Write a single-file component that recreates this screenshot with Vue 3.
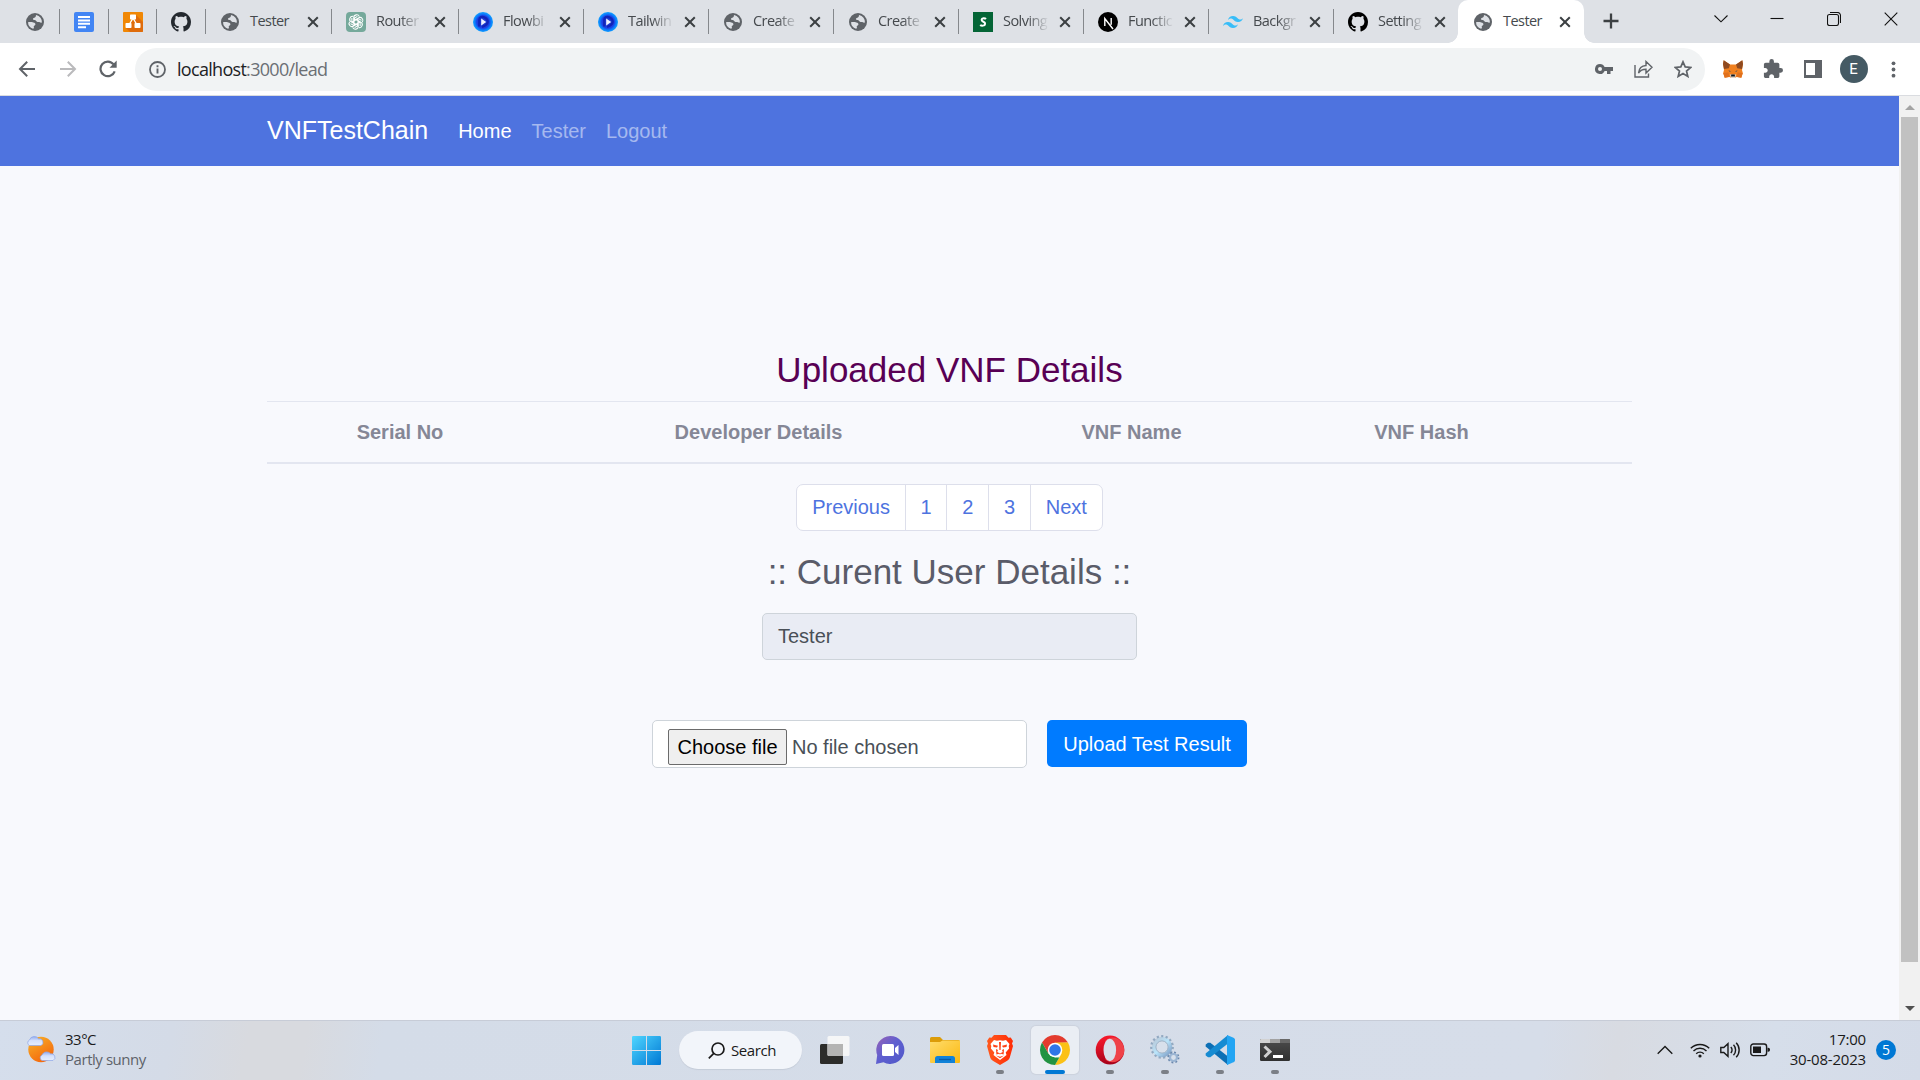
<script setup>
const pinned = [
  { icon: 'globe', size: 18, width: 49 },
  { icon: 'docs', size: 20, width: 49 },
  { icon: 'diagram', size: 20, width: 48 },
  { icon: 'github', size: 20, width: 49, tint: '#24292f' },
]
const tabs = [
  { icon: 'globe', title: 'Tester', width: 126 },
  { icon: 'openai', title: 'Router', width: 127, fade: true },
  { icon: 'flow', title: 'Flowbi', width: 125, fade: true },
  { icon: 'flow', title: 'Tailwin', width: 125, fade: true },
  { icon: 'globe', title: 'Create', width: 125, fade: true },
  { icon: 'globe', title: 'Create', width: 125, fade: true },
  { icon: 'scaler', title: 'Solving', width: 125, fade: true },
  { icon: 'next', title: 'Functic', width: 125, fade: true },
  { icon: 'tailwind', title: 'Backgr', width: 125, fade: true },
  { icon: 'github', title: 'Setting', width: 126, fade: true, last: true },
]
const columns = [
  { label: 'Serial No', width: 266 },
  { label: 'Developer Details', width: 451 },
  { label: 'VNF Name', width: 295 },
  { label: 'VNF Hash', width: 285 },
  { label: '', width: 68 },
]
const pages = ['Previous', '1', '2', '3', 'Next']
const apps = [
  { icon: 'taskview' },
  { icon: 'chat' },
  { icon: 'folder' },
  { icon: 'brave', running: true },
  { icon: 'chrome', running: true, active: true },
  { icon: 'opera', running: true },
  { icon: 'gears', running: true },
  { icon: 'vscode', running: true },
  { icon: 'terminal', running: true },
]
</script>

<template>
  <div class="screen">
    <svg class="defs" aria-hidden="true">
      <defs>
        <linearGradient id="gWin" x1="0" y1="0" x2="1" y2="1"><stop offset="0" stop-color="#4fd6ff" /><stop offset="1" stop-color="#0078d4" /></linearGradient>
        <linearGradient id="gSun" x1="0" y1="0" x2="0.6" y2="1"><stop offset="0" stop-color="#f8b52a" /><stop offset="1" stop-color="#f4670c" /></linearGradient>
        <linearGradient id="gCloud" x1="0" y1="0" x2="0" y2="1"><stop offset="0" stop-color="#8faaf0" /><stop offset=".45" stop-color="#d4e0fb" /><stop offset="1" stop-color="#e6eefd" /></linearGradient>
        <linearGradient id="gChat" x1="0" y1="0" x2="1" y2="1"><stop offset="0" stop-color="#9a62b4" /><stop offset=".45" stop-color="#5f5fd0" /><stop offset="1" stop-color="#5058c8" /></linearGradient>
        <linearGradient id="gFolder" x1="0" y1="0" x2="1" y2="1"><stop offset="0" stop-color="#ffdc6b" /><stop offset="1" stop-color="#fbb911" /></linearGradient>
        <linearGradient id="gBrave" x1="0" y1="0" x2="1" y2="0"><stop offset="0" stop-color="#ff5a1f" /><stop offset="1" stop-color="#ff2b05" /></linearGradient>
        <linearGradient id="gOpera" x1="0" y1="0" x2="0.2" y2="1"><stop offset="0" stop-color="#ff1b2d" /><stop offset="1" stop-color="#a8021a" /></linearGradient>
        <linearGradient id="gGear" x1="0" y1="0" x2="1" y2="1"><stop offset="0" stop-color="#b9c7d6" /><stop offset=".5" stop-color="#b9e4fa" /><stop offset="1" stop-color="#7c9cc4" /></linearGradient>
        <linearGradient id="gTerm" x1="0" y1="0" x2="0" y2="1"><stop offset="0" stop-color="#4c4c4c" /><stop offset="1" stop-color="#303030" /></linearGradient>
        <radialGradient id="gFlow"><stop offset="0" stop-color="#2a3cc8" /><stop offset=".62" stop-color="#1b3fe6" /><stop offset=".8" stop-color="#0b7cfb" /><stop offset="1" stop-color="#11a0ff" /></radialGradient>
      </defs>
      <symbol id="globe" viewBox="0 0 18 18">
        <circle cx="9" cy="9" r="9" fill="#5f6368" />
        <path fill="#dee1e6" d="M10.2 2.1C9.6 3 10.1 3.6 9.2 4.2 8.2 4.8 6.9 4.9 6.9 6.1c0 .9 1 .9 1.8 1 1.2.1 1.3 1.2 2.3 1.7.9.4 1.5-.1 2.3.3.8.5 1.7.6 2.6.5A7 7 0 0 0 10.2 2.1z" />
        <path fill="#dee1e6" d="M2 9.3C3.5 9 5.7 9 7.3 9.4c1.5.4 2.4 1 2.1 2.2-.2.9-1.2 1-1.6 1.7-.3.7.3 1 .1 1.6-.1.4-.6.7-.9.8A7 7 0 0 1 2 9.3z" />
      </symbol>
      <symbol id="docs" viewBox="0 0 20 20">
        <rect width="20" height="20" rx="2" fill="#4285f4" />
        <path stroke="#fff" stroke-width="2" d="M4 5h12M4 8.400h12M4 11.800h12M4 15.200h8" />
      </symbol>
      <symbol id="diagram" viewBox="0 0 20 20">
        <rect width="20" height="20" rx="1" fill="#f08705" />
        <path fill="#df6c0c" d="M13 3l7 7v9a1 1 0 0 1-1 1H7l-4-4 7-8z" />
        <path stroke="#fff" stroke-width="1.4" fill="none" d="M10 6L6 13M10 6l4 7" />
        <rect x="7" y="2.5" width="6" height="5" rx=".7" fill="#fff" /><rect x="2.5" y="11" width="6" height="5" rx=".7" fill="#fff" /><rect x="11.5" y="11" width="6" height="5" rx=".7" fill="#fff" />
      </symbol>
      <symbol id="github" viewBox="0 0 16 16">
        <path fill="currentColor" d="M8 0C3.580 0 0 3.580 0 8c0 3.540 2.290 6.530 5.470 7.590.4.070.55-.17.55-.38 0-.19-.01-.82-.01-1.490-2.010.37-2.530-.49-2.690-.94-.09-.23-.48-.94-.82-1.130-.28-.15-.68-.52-.01-.53.63-.01 1.080.58 1.230.82.72 1.210 1.870.87 2.330.66.07-.52.28-.87.51-1.070-1.780-.2-3.640-.89-3.640-3.950 0-.87.31-1.590.82-2.150-.08-.2-.36-1.020.08-2.120 0 0 .67-.21 2.200.82.64-.18 1.320-.27 2-.27s1.360.09 2 .27c1.530-1.040 2.200-.82 2.200-.82.44 1.100.16 1.920.08 2.120.51.56.82 1.270.82 2.150 0 3.070-1.870 3.750-3.650 3.950.29.25.54.73.54 1.480 0 1.070-.01 1.930-.01 2.200 0 .21.15.46.55.38A8.010 8.010 0 0 0 16 8c0-4.420-3.580-8-8-8z" />
      </symbol>
      <symbol id="openai" viewBox="0 0 20 20">
        <rect width="20" height="20" rx="4" fill="#75a99b" />
        <g fill="none" stroke="#fff" stroke-width="1.05">
          <path id="petal" d="M10 7.700L7.700 9V5.800c0-3.400 4.500-4 5.700-1.200M8.600 8.500V6.100l2.800-1.700" />
          <use href="#petal" transform="rotate(60 10 10)" /><use href="#petal" transform="rotate(120 10 10)" /><use href="#petal" transform="rotate(180 10 10)" /><use href="#petal" transform="rotate(240 10 10)" /><use href="#petal" transform="rotate(300 10 10)" />
        </g>
      </symbol>
      <symbol id="flow" viewBox="0 0 20 20">
        <circle cx="10" cy="10" r="10" fill="url(#gFlow)" />
        <path fill="none" stroke="#1224b8" stroke-width="2.2" d="M6.200 14.500V8c0-3 3-4 5.500-2.500 4 2.200 4 6 .3 8L9 15" />
        <path fill="#eef2ff" d="M8.200 6.400l5 3.500-5 3.500z" />
      </symbol>
      <symbol id="scaler" viewBox="0 0 20 20">
        <rect width="20" height="20" fill="#046536" />
        <path fill="none" stroke="#fff" stroke-width="2" d="M13 7C12 6 8.800 5.700 8.600 7.900 8.400 10 12.400 9.500 12.100 11.800 11.800 14.200 8.300 13.900 7.200 12.900" />
      </symbol>
      <symbol id="next" viewBox="0 0 20 20">
        <circle cx="10" cy="10" r="10" fill="#000" />
        <path fill="none" stroke="#fff" stroke-width="1.4" d="M6.800 14V6.500L15 17M13.200 6v6.800" />
      </symbol>
      <symbol id="tailwind" viewBox="0 0 24 24">
        <path fill="#38bdf8" d="M12 4.800c-3.200 0-5.200 1.600-6 4.800 1.200-1.600 2.600-2.200 4.200-1.800.91.23 1.570.89 2.290 1.620C13.670 10.620 15.030 12 18 12c3.200 0 5.200-1.600 6-4.800-1.200 1.600-2.600 2.200-4.200 1.800-.91-.23-1.570-.89-2.290-1.620C16.330 6.180 14.970 4.800 12 4.800zM6 12c-3.200 0-5.200 1.600-6 4.800 1.200-1.600 2.600-2.200 4.200-1.800.91.230 1.570.89 2.290 1.620C7.670 17.820 9.030 19.200 12 19.200c3.200 0 5.200-1.600 6-4.800-1.200 1.600-2.600 2.200-4.200 1.800-.91-.23-1.570-.89-2.290-1.620C10.330 13.380 8.970 12 6 12z" />
      </symbol>
      <symbol id="close" viewBox="0 0 12 12"><path fill="none" stroke="#3c4043" stroke-width="2" d="M1.200 1.200l9.600 9.600M10.800 1.200l-9.600 9.600" /></symbol>

      <symbol id="taskview" viewBox="0 0 30 30">
        <rect x="0" y="9" width="23" height="20" rx="1.5" fill="#2c2c2a" />
        <rect x="7.5" y="1" width="22" height="20" rx="1.5" fill="#f5f6f7" />
        <path fill="#b4b4b3" d="M7.500 9H23v12H9a1.500 1.500 0 0 1-1.500-1.500z" />
      </symbol>
      <symbol id="chat" viewBox="0 0 30 30">
        <path fill="url(#gChat)" d="M15.200 1A14 14 0 1 1 8.500 27.200L1 29 2.200 20A14 14 0 0 1 15.200 1z" />
        <rect x="7" y="9" width="12" height="12" rx="1.5" fill="#fff" /><path fill="#fff" d="M20 13l3.500-3v10L20 17z" />
      </symbol>
      <symbol id="folder" viewBox="0 0 30 30">
        <path fill="#dc9c08" d="M0 3.500A1.500 1.500 0 0 1 1.500 2H10l3 3h15.500A1.500 1.500 0 0 1 30 6.500V12H0z" />
        <path fill="url(#gFolder)" d="M0 7h10l2.500-1.500H30v21.500a1 1 0 0 1-1 1H1a1 1 0 0 1-1-1z" />
        <path fill="#1182d8" d="M5 28v-4.500a2.500 2.500 0 0 1 2.500-2.500h15a2.500 2.500 0 0 1 2.500 2.500V28z" /><path stroke="#0a5ba6" stroke-width="1.3" d="M9 24.500h12" />
      </symbol>
      <symbol id="brave" viewBox="0 0 30 30">
        <path fill="url(#gBrave)" d="M9 0h12l2.500 2.700 2.200-.2L28 6l-1 2.500L28 11l-3.200 11.500c-.5 1.700-1.500 2.500-3 3.500L15 30l-6.800-4c-1.500-1-2.500-1.800-3-3.500L2 11l1-2.500L2 6l2.300-3.500 2.200.2z" />
        <path fill="#fff" d="M9 5l3 .8 3-.6 3 .6 3-.8 3.500 4-.8 2 .4 2.500-3.400 4 .8 2.500L19 22l-4 3-4-3-2.500-2 .8-2.500-3.400-4 .4-2.500-.8-2z" />
        <path fill="#ff4216" d="M8 9.500l5 1.200-1 1.700-3.500-.3zM22 9.500l-5 1.200 1 1.700 3.500-.3zM11 14l2 1-.8 2L15 18.600l2.800-1.600-.8-2 2-1-.4 5.500-2.600-.8-1 .8-1-.8-2.600.8zM14 7h2l-.4 8h-1.200zM11 20.500l4 1.200 4-1.200-4 2.800z" />
      </symbol>
      <symbol id="chrome" viewBox="0 0 30 30">
        <path fill="#e33b2e" d="M2.010 7.500A15 15 0 0 1 27.990 7.500L15 8 8.500 18.750z" />
        <path fill="#fbc116" d="M27.990 7.500A15 15 0 0 1 15 30L21.500 18.750 15 7.500z" />
        <path fill="#229342" d="M15 30A15 15 0 0 1 2.010 7.500L8.500 18.750 15 22.500h4.300z" />
        <circle cx="15" cy="15" r="7.3" fill="#fff" /><circle cx="15" cy="15" r="5.8" fill="#2f76e8" />
      </symbol>
      <symbol id="opera" viewBox="0 0 30 30">
        <ellipse cx="15" cy="15" rx="14.3" ry="14.5" fill="url(#gOpera)" />
        <path fill="#ef4248" d="M10.500 5.500C15 1 23 1.500 27 8c3 5 3 10 0 14-4 6-12 7-16.500 2.500z" />
        <ellipse cx="14.8" cy="15" rx="6.3" ry="11.2" fill="#d9dfe9" />
      </symbol>
      <symbol id="gears" viewBox="0 0 30 30">
        <circle cx="12" cy="12" r="8.3" fill="#c7dbe9" stroke="url(#gGear)" stroke-width="4" /><circle cx="12" cy="12" r="10.8" fill="none" stroke="#92a9c1" stroke-width="2.2" stroke-dasharray="2.2 2.32" /><circle cx="12" cy="12" r="6.1" fill="#d8e0eb" stroke="#93a7bd" stroke-width=".8" />
        <circle cx="23.5" cy="22.5" r="3.5" fill="#d8e0eb" stroke="#9bb5d3" stroke-width="2.2" /><circle cx="23.5" cy="22.5" r="5.2" fill="none" stroke="#6c89ae" stroke-width="1.5" stroke-dasharray="1.9 2.18" />
      </symbol>
      <symbol id="vscode" viewBox="0 0 30 30">
        <path fill="#0c6fb5" d="M.7 9.600L3 7.700l2.300.1L23 21.500V30L.6 11.400z" />
        <path fill="#168bd2" d="M.7 20.400L3 22.300l2.300-.1L23 8.500V0L.6 18.600z" />
        <path fill="#23a5f3" d="M22 0l6.500 2.700c1 .5 1.500 1.200 1.500 2.300v20c0 1.100-.5 1.800-1.500 2.300L22 30z" />
      </symbol>
      <symbol id="terminal" viewBox="0 0 30 30">
        <rect x="0" y="4" width="30" height="22" rx="1.2" fill="url(#gTerm)" />
        <path fill="#d2d2d2" d="M1.200 4H10v4H0V5.200A1.200 1.200 0 0 1 1.200 4z" /><path fill="#a2a2a2" d="M10 4h10v4H10z" /><path fill="#686868" d="M20 4h8.800A1.200 1.200 0 0 1 30 5.200V8H20z" />
        <path fill="none" stroke="#d0d0d0" stroke-width="3" d="M4.500 11.500l5.500 5.200-5.500 5.300" /><path fill="#fff" d="M13 20h10v3H13z" />
      </symbol>
    </svg>

    <header class="tabstrip">
      <div v-for="(t, i) in pinned" :key="'p' + i" class="tab pin" :style="{ width: t.width + 'px' }">
        <svg :width="t.size" :height="t.size" :style="{ color: t.tint }"><use :href="'#' + t.icon" /></svg>
      </div>
      <div v-for="(t, i) in tabs" :key="i" class="tab" :class="{ last: t.last }" :style="{ width: t.width + 'px' }">
        <span class="fav"><svg :width="t.icon === 'globe' ? 18 : 20" :height="t.icon === 'globe' ? 18 : 20"><use :href="'#' + t.icon" /></svg></span>
        <span class="title" :class="{ fade: t.fade }">{{ t.title }}</span>
        <svg class="x" width="12" height="12"><use href="#close" /></svg>
      </div>
      <div class="tab current">
        <span class="fav"><svg width="18" height="18"><use href="#globe" /></svg></span>
        <span class="title">Tester</span>
        <svg class="x" width="12" height="12"><use href="#close" /></svg>
      </div>
      <svg class="plus" width="16" height="16" viewBox="0 0 16 16"><path stroke="#3c4043" stroke-width="2.3" d="M8 .5v15M.5 8h15" /></svg>
      <div class="controls">
        <svg width="14" height="14" viewBox="0 0 14 14"><path d="M.5 3.500L7 9.800l6.500-6.300" /></svg>
        <svg width="14" height="14" viewBox="0 0 14 14"><path d="M.5 6.500h13" /></svg>
        <svg width="14" height="14" viewBox="0 0 14 14"><rect x=".5" y="2.5" width="11" height="11" rx="2" /><path d="M3 .5h7.500a3 3 0 0 1 3 3V11" /></svg>
        <svg width="14" height="14" viewBox="0 0 14 14"><path d="M.7.700l12.600 12.600M13.300.700L.7 13.300" /></svg>
      </div>
    </header>

    <div class="toolbar">
      <div class="nav-buttons">
        <svg width="18" height="18" viewBox="0 0 18 18" fill="none" stroke="#5f6368" stroke-width="2"><path d="M17 9H2.500M9.200 1.700L2 9l7.200 7.300" /></svg>
        <svg width="18" height="18" viewBox="0 0 18 18" fill="none" stroke="#bababc" stroke-width="2"><path d="M1 9h14.500M8.800 1.700L16 9l-7.200 7.300" /></svg>
        <svg width="18" height="18" viewBox="0 0 18 18" fill="none" stroke="#5f6368" stroke-width="2.2"><path d="M15.700 11.300A7.300 7.300 0 1 1 14.600 4.400" /><path fill="#5f6368" stroke="none" d="M17.700.5v7.200h-7.200z" /></svg>
      </div>
      <div class="omnibox">
        <svg width="17" height="17" viewBox="0 0 17 17"><circle cx="8.5" cy="8.5" r="7.5" fill="none" stroke="#5f6368" stroke-width="1.8" /><path stroke="#5f6368" stroke-width="1.9" d="M8.500 7.500v5M8.500 4.300v2" /></svg>
        <span class="url">localhost<i>:3000/lead</i></span>
        <svg class="key" width="18" height="12" viewBox="0 0 18 12"><path fill="#5f6368" fill-rule="evenodd" d="M5 1a5 5 0 1 0 4.600 7H12v3h3.500V8H18V4H9.600A5 5 0 0 0 5 1zm0 3a2 2 0 1 1 0 4 2 2 0 0 1 0-4z" /></svg>
        <svg class="share" width="19" height="18" viewBox="0 0 19 18" fill="none" stroke="#5f6368" stroke-width="1.4"><path d="M1 5v12h13.500v-3.500M4.500 13C5 8.500 7.500 5.700 12 5.500V1.500L18 7.300l-6 5.700V9.200C8.500 9.200 6.300 10.300 4.500 13z" /></svg>
        <svg class="star" width="18" height="18" viewBox="0 0 18 18"><path fill="none" stroke="#5f6368" stroke-width="1.7" d="M9 1.800l2.200 5.100 5.500.5-4.200 3.600 1.300 5.400L9 13.500l-4.800 2.900L5.500 11 1.300 7.400l5.500-.5z" /></svg>
      </div>
      <svg class="fox" width="20" height="19" viewBox="0 0 20 19">
        <path fill="#f0801f" d="M.7.300L7 4.500h6L19.300.3 20 4l-1 6 .8 3-1.500 4.700-4.700-.7L11.500 18h-3l-2.100-1-4.700.7L.2 13 1 10 0 4z" />
        <path fill="#8f4a20" d="M.7.300L7 4.500l-1.200 3.700L1 8.900 0 4zM19.300.3L13 4.500l1.200 3.700 4.800.7L20 4z" />
        <path fill="#e0701d" d="M.2 13l5.200-.4 1 4.200-4.700.9zM19.800 13l-5.200-.4-1 4.200 4.700.9z" />
        <path fill="#3a4a5e" d="M5.500 10.300l2.700 1.300-2-.2zM14.500 10.300l-2.700 1.300 2-.2z" /><path fill="#dcd3cb" d="M6.800 14.500h6.400L12 18H8z" /><path fill="#10181f" d="M8.300 14.600h3.400l.3 1.800H8z" />
      </svg>
      <svg class="puzzle" width="20" height="20" viewBox="1 1 22 22"><path fill="#5f6368" d="M20.500 11H19V7c0-1.100-.9-2-2-2h-4V3.500a2.500 2.500 0 0 0-5 0V5H4c-1.100 0-1.990.9-1.990 2v3.800H3.500c1.490 0 2.700 1.210 2.700 2.700s-1.210 2.700-2.700 2.700H2V20c0 1.100.9 2 2 2h3.800v-1.500c0-1.490 1.210-2.700 2.700-2.700s2.700 1.210 2.700 2.700V22H17c1.100 0 2-.9 2-2v-4h1.500a2.500 2.500 0 0 0 0-5z" /></svg>
      <svg class="panel" width="18" height="18" viewBox="0 0 18 18"><path fill="#5f6368" fill-rule="evenodd" d="M0 0h18v18H0zM2 3v12h9V3z" /></svg>
      <span class="avatar">E</span>
      <svg class="dots" width="5" height="17" viewBox="0 0 5 17" fill="#5f6368"><circle cx="2.500" cy="2.300" r="1.900" /><circle cx="2.500" cy="8.500" r="1.900" /><circle cx="2.500" cy="14.700" r="1.900" /></svg>
    </div>

    <div class="viewport">
      <div class="page">
        <nav class="navbar">
          <a class="brand">VNFTestChain</a>
          <a class="link on">Home</a>
          <a class="link">Tester</a>
          <a class="link">Logout</a>
        </nav>
        <main class="container">
          <h2 class="heading uploaded">Uploaded VNF Details</h2>
          <table class="vnf">
            <thead>
              <tr><th v-for="c in columns" :key="c.label" :style="{ width: c.width + 'px' }">{{ c.label }}</th></tr>
            </thead>
          </table>
          <ul class="pagination">
            <li v-for="p in pages" :key="p">{{ p }}</li>
          </ul>
          <h2 class="heading">:: Curent User Details ::</h2>
          <div class="field role">Tester</div>
          <div class="upload">
            <div class="field file"><span class="choose">Choose file</span><span>No file chosen</span></div>
            <div class="submit">Upload Test Result</div>
          </div>
        </main>
      </div>
      <div class="scrollbar">
        <i class="up"></i>
        <div class="thumb"></div>
        <i class="down"></i>
      </div>
    </div>

    <footer class="taskbar">
      <div class="weather">
        <svg width="30" height="30" viewBox="0 0 30 30">
          <circle cx="15" cy="15.5" r="12.7" fill="url(#gSun)" />
          <path fill="url(#gCloud)" stroke="#8ea6e6" stroke-width=".7" d="M3.500 11.500a3 3 0 0 1 0-5.500 5 5 0 0 1 9-1.200 3.600 3.600 0 0 1 2.500 6.700z" />
          <path fill="url(#gCloud)" stroke="#8ea6e6" stroke-width=".7" d="M16 26.500a3 3 0 0 1 0-5.500 5 5 0 0 1 8.500-1.200A3.600 3.600 0 0 1 27 26.500z" />
        </svg>
        <div class="weather-text"><span>33°C</span><span class="cond">Partly sunny</span></div>
      </div>
      <svg class="start" width="29" height="29" viewBox="0 0 29 29"><path fill="url(#gWin)" d="M1.200 0H14v14H0V1.200A1.200 1.200 0 0 1 1.200 0zM15 0h12.800A1.200 1.200 0 0 1 29 1.200V14H15zM0 15h14v14H1.200A1.200 1.200 0 0 1 0 27.800zM15 15h14v12.800a1.200 1.200 0 0 1-1.200 1.200H15z" /></svg>
      <div class="search">
        <svg width="17" height="17" viewBox="0 0 17 17" fill="none" stroke="#1a1a1a" stroke-width="1.7"><circle cx="10" cy="7" r="6" /><path d="M5.800 11.300L.8 16.300" /></svg>
        <span>Search</span>
      </div>
      <div class="apps">
        <div v-for="a in apps" :key="a.icon" class="app" :class="{ active: a.active }">
          <svg width="30" height="30"><use :href="'#' + a.icon" /></svg>
          <i v-if="a.running" class="mark"></i>
        </div>
      </div>
      <div class="tray">
        <svg width="16" height="10" viewBox="0 0 16 10"><path d="M.7 8.800L8 1.500l7.300 7.300" /></svg>
        <svg width="20" height="16" viewBox="0 0 20 16"><path d="M.8 6.300a13 13 0 0 1 18.400 0M3.500 9a9.200 9.200 0 0 1 13 0M6.200 11.700a5.400 5.400 0 0 1 7.600 0" /><circle cx="10" cy="14" r="1.6" fill="#1a1a1a" stroke="none" /></svg>
        <svg width="20" height="16" viewBox="0 0 20 16"><path d="M.8 5.500h3L8 1.700v12.600L3.800 10.500h-3zM10.800 5a4.200 4.200 0 0 1 0 6M13.500 2.800a7.500 7.500 0 0 1 0 10.400M16.200.7a10.500 10.500 0 0 1 0 14.600" /></svg>
        <svg width="20" height="14" viewBox="0 0 20 14"><rect x=".8" y="1" width="15.8" height="11.6" rx="2.5" /><path fill="#1a1a1a" stroke="none" d="M3 3.500h8v6.600H3zM17.500 4.800h.8a1.700 1.700 0 0 1 1.700 1.700v.6a1.700 1.700 0 0 1-1.700 1.700h-.8z" /></svg>
        <div class="clock"><span>17:00</span><span>30-08-2023</span></div>
        <span class="badge">5</span>
      </div>
    </footer>
  </div>
</template>

<style>
body {
  margin: 0;
}
</style>

<style scoped>
.screen {
  width: 1920px;
  height: 1080px;
  display: flex;
  flex-direction: column;
  overflow: hidden;
  font-family: "Open Sans", "Noto Sans", sans-serif;
}
.screen * {
  box-sizing: border-box;
}
svg {
  display: block;
  flex: none;
}
.defs {
  position: absolute;
  width: 0;
  height: 0;
}

.tabstrip {
  height: 43px;
  background: #dee1e6;
  display: flex;
  padding-left: 11px;
}
.tab {
  height: 43px;
  flex: none;
  display: flex;
  align-items: center;
  position: relative;
  padding-left: 14px;
}
.tab::after {
  content: "";
  position: absolute;
  right: 0;
  top: 9px;
  width: 1px;
  height: 25px;
  background: #85888c;
}
.tab.last::after {
  display: none;
}
.pin {
  padding: 0 1px 0 0;
  justify-content: center;
}
.fav {
  width: 20px;
  display: flex;
  justify-content: center;
}
.title {
  width: 46px;
  margin-left: 10px;
  padding-bottom: 2px;
  font-size: 14.5px;
  letter-spacing: -0.55px;
  line-height: 20px;
  color: #45494d;
  white-space: nowrap;
}
.title.fade {
  -webkit-mask-image: linear-gradient(90deg, #000 52%, transparent 100%);
  mask-image: linear-gradient(90deg, #000 52%, transparent 100%);
}
.x {
  margin-left: auto;
  margin-right: 13.5px;
}
.last .x {
  margin-right: 14px;
}
.current {
  width: 126px;
  background: #fff;
  border-radius: 10px 10px 0 0;
  margin-left: -2px;
  padding-left: 15px;
}
.current::before,
.current::after {
  content: "";
  position: absolute;
  top: auto;
  bottom: 0;
  width: 10px;
  height: 10px;
}
.current::before {
  left: -10px;
  background: radial-gradient(circle at 0 0, transparent 9.5px, #fff 10px);
}
.current::after {
  right: -10px;
  background: radial-gradient(circle at 100% 0, transparent 9.5px, #fff 10px);
}
.plus {
  margin: 13px 0 0 19px;
}
.controls {
  margin-left: auto;
  display: flex;
  gap: 43px;
  padding: 12px 22px 0 0;
}
.controls svg {
  fill: none;
  stroke: #111;
  stroke-width: 1.1;
}
.controls svg:first-child {
  margin-right: -0.5px;
}

.toolbar {
  height: 53px;
  flex: none;
  background: #fff;
  border-bottom: 1px solid #dadce0;
  display: flex;
  align-items: center;
}
.nav-buttons {
  width: 135px;
  display: flex;
  gap: 22.5px;
  padding-left: 18px;
}
.omnibox {
  width: 1570px;
  height: 43px;
  border-radius: 22px;
  background: #f1f3f4;
  display: flex;
  align-items: center;
  padding-left: 14px;
}
.url {
  margin-left: 11px;
  font-size: 18px;
  letter-spacing: -0.7px;
  line-height: 24px;
  color: #202124;
}
.url i {
  font-style: normal;
  color: #6b6f74;
}
.key {
  margin-left: auto;
}
.share {
  margin-left: 21px;
}
.star {
  margin: 0 13.5px 0 20.5px;
}
.fox {
  margin-left: 17.5px;
}
.puzzle {
  margin-left: 20.5px;
}
.panel {
  margin-left: 20.5px;
}
.avatar {
  width: 28px;
  height: 28px;
  margin-left: 18px;
  border-radius: 50%;
  background: #455a64;
  color: #fff;
  font: 15px/28px Roboto, sans-serif;
  text-align: center;
}
.dots {
  margin-left: 23px;
}

.viewport {
  height: 924px;
  flex: none;
  display: flex;
}
.page {
  width: 1899px;
  background: #f8f9fd;
  font-family: "Liberation Sans", Arial, sans-serif;
  font-size: 20px;
  line-height: 30px;
}
.navbar {
  height: 70px;
  background: #4e73df;
  padding: 0 267px;
  display: flex;
  align-items: center;
  gap: 20px;
}
.brand {
  font-size: 25px;
  color: #fff;
  margin-right: 10px;
  padding-bottom: 2px;
}
.link {
  color: rgba(255, 255, 255, 0.5);
}
.link.on {
  color: #fff;
}
.container {
  width: 1365px;
  margin: 0 auto;
  padding-top: 183px;
  display: flex;
  flex-direction: column;
  align-items: center;
}
.heading {
  margin: 0;
  font-size: 35px;
  font-weight: 400;
  line-height: 42px;
  color: #5a5c69;
}
.uploaded {
  color: #580054;
}
.vnf {
  width: 1365px;
  margin-top: 10px;
  table-layout: fixed;
  border-collapse: separate;
  border-spacing: 0;
  color: #858796;
}
.vnf th {
  height: 63px;
  padding: 0;
  border-top: 1px solid #e3e6f0;
  border-bottom: 2px solid #e3e6f0;
  font-weight: 700;
  text-align: center;
}
.pagination {
  margin: 20px 0;
  padding: 0;
  list-style: none;
  display: flex;
  height: 47px;
  background: #fff;
  border: 1px solid #dddfeb;
  border-radius: 7px;
  color: #4e73df;
}
.pagination li {
  padding: 0 14.8px;
  line-height: 45px;
}
.pagination li + li {
  border-left: 1px solid #dddfeb;
}
.field {
  width: 375px;
  height: 47px;
  border: 1px solid #ced4da;
  border-radius: 5px;
  padding: 0 15px;
  line-height: 45px;
  color: #495057;
}
.role {
  margin-top: 20px;
  background: #e9ecf4;
}
.upload {
  margin-top: 60px;
  display: flex;
  gap: 20px;
}
.file {
  height: 48px;
  background: #fff;
  display: flex;
  align-items: flex-start;
  gap: 5px;
  padding-top: 8px;
  line-height: 36px;
}
.choose {
  height: 36px;
  width: 119px;
  border: 1px solid #6b6b6b;
  border-radius: 2px;
  background: #efefef;
  color: #000;
  text-align: center;
  line-height: 34px;
}
.submit {
  width: 200px;
  height: 47px;
  border-radius: 5px;
  background: #007bff;
  color: #fff;
  text-align: center;
  line-height: 48px;
}

.scrollbar {
  width: 21px;
  background: #f1f1f1;
  display: flex;
  flex-direction: column;
  align-items: center;
}
.thumb {
  width: 17px;
  height: 845px;
  background: #c1c1c1;
}
.up {
  margin: 9px 0 7px;
  border: 5px solid transparent;
  border-top: 0;
  border-bottom-color: #a3a3a3;
}
.down {
  margin-top: 44px;
  border: 5px solid transparent;
  border-bottom: 0;
  border-top-color: #505050;
}

.taskbar {
  height: 60px;
  flex: none;
  display: flex;
  align-items: center;
  background: linear-gradient(100deg, #d5deec 0, #d4dbe7 9%, #d8dadf 13%, #d8dadf 16%, #d4dce8 20%, #d6dde9 80%, #d8dbe2 84%, #d6deea 92%, #d4dbe8 100%);
  box-shadow: inset 0 1px 0 #c7ccd7;
  color: #1a1a1a;
  font-size: 15px;
  line-height: 20px;
}
.weather {
  width: 632px;
  display: flex;
  padding-left: 26px;
  gap: 9px;
  align-items: center;
}
.weather svg {
  margin-bottom: 2px;
}
.weather-text {
  display: flex;
  flex-direction: column;
  padding-bottom: 2px;
  letter-spacing: -0.5px;
}
.cond {
  color: #5d6269;
  letter-spacing: -0.45px;
}
.search {
  width: 123px;
  height: 38px;
  margin-left: 18px;
  border-radius: 19px;
  background: #f2f5fa;
  box-shadow: 0 1px 1px #c5ccd8;
  display: flex;
  align-items: center;
  gap: 6px;
  padding-left: 29px;
  letter-spacing: -0.4px;
}
.search span {
  padding-bottom: 1px;
}
.apps {
  display: flex;
  gap: 7px;
  margin-left: 9px;
}
.app {
  width: 48px;
  height: 48px;
  border-radius: 5px;
  display: flex;
  justify-content: center;
  padding-top: 9px;
  position: relative;
}
.app.active {
  background: #eaeef4;
  box-shadow: 0 0 1px 1px #ccd2dd;
}
.mark {
  position: absolute;
  bottom: 0;
  left: 20px;
  width: 8px;
  height: 4px;
  border-radius: 2px;
  background: #7b7f86;
}
.active .mark {
  left: 14px;
  width: 20px;
  background: #0078d4;
}
.tray {
  margin-left: auto;
  display: flex;
  align-items: center;
  gap: 10px;
  padding-right: 24px;
}
.tray svg {
  fill: none;
  stroke: #1a1a1a;
  stroke-width: 1.4;
}
.tray svg:first-child {
  margin-right: 7px;
}
.clock {
  width: 86px;
  display: flex;
  flex-direction: column;
  padding-bottom: 3px;
  text-align: right;
  letter-spacing: -0.2px;
}
.badge {
  width: 20px;
  height: 20px;
  border-radius: 50%;
  background: #0078d4;
  color: #fff;
  font-size: 14px;
  text-align: center;
}
</style>
